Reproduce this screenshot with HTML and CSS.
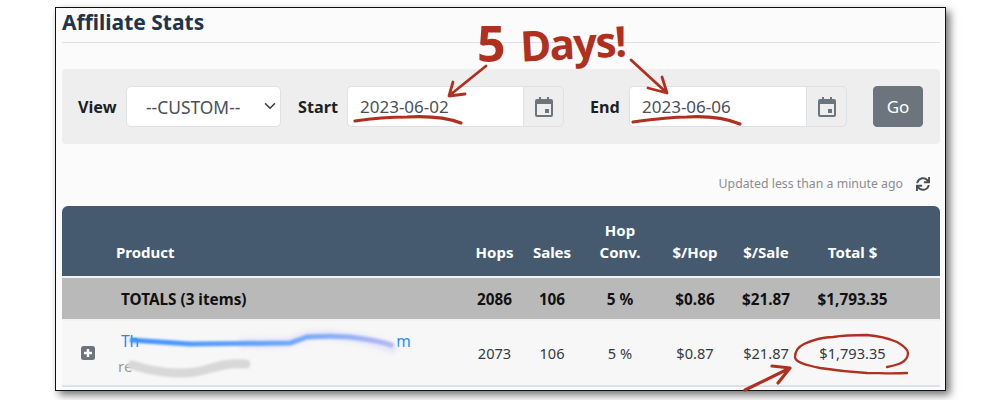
FILE: index.html
```html
<!DOCTYPE html>
<html lang="en">
<head>
<meta charset="utf-8">
<title>Affiliate Stats</title>
<link rel="stylesheet" href="styles.css">
</head>
<body>
<main class="window">
  <h1 class="title">Affiliate Stats</h1>
  <form class="filters">
    <label class="lbl lbl-view" for="view">View</label>
    <div class="select-wrap">
      <select id="view" class="select"><option>--CUSTOM--</option></select>
      <svg class="chevron" viewBox="0 0 16 16" width="12" height="12"><path d="M2 5l6 6 6-6" fill="none" stroke="#343a40" stroke-width="2" stroke-linecap="round" stroke-linejoin="round"/></svg>
    </div>
    <label class="lbl lbl-start" for="start">Start</label>
    <div class="date-group date-group-start">
      <input id="start" class="date-input" type="text" value="2023-06-02">
      <span class="addon"><svg width="18" height="20" viewBox="0 0 18 20"><path class="cal" d="M4 0h2v2h6V0h2v2h2a2 2 0 0 1 2 2v14a2 2 0 0 1-2 2H2a2 2 0 0 1-2-2V4a2 2 0 0 1 2-2h2zM2 7v11h14V7zm8 5h4v4h-4z"/></svg></span>
    </div>
    <label class="lbl lbl-end" for="end">End</label>
    <div class="date-group">
      <input id="end" class="date-input" type="text" value="2023-06-06">
      <span class="addon"><svg width="18" height="20" viewBox="0 0 18 20"><path class="cal" d="M4 0h2v2h6V0h2v2h2a2 2 0 0 1 2 2v14a2 2 0 0 1-2 2H2a2 2 0 0 1-2-2V4a2 2 0 0 1 2-2h2zM2 7v11h14V7zm8 5h4v4h-4z"/></svg></span>
    </div>
    <button class="go" type="button">Go</button>
  </form>
  <div class="updated">
    <span>Updated less than a minute ago</span>
    <svg class="refresh" viewBox="0 0 512 512" width="14" height="14"><path d="M440.65 12.57l4 82.77A247.16 247.16 0 0 0 255.83 8C134.73 8 33.91 94.92 12.29 209.82A12 12 0 0 0 24.09 224h49.05a12 12 0 0 0 11.67-9.26 175.91 175.91 0 0 1 317-56.94l-101.46-4.86a12 12 0 0 0-12.57 12v47.41a12 12 0 0 0 12 12H500a12 12 0 0 0 12-12V12a12 12 0 0 0-12-12h-47.37a12 12 0 0 0-11.98 12.57zM255.83 432a175.61 175.61 0 0 1-146-77.8l101.8 4.87a12 12 0 0 0 12.57-12v-47.4a12 12 0 0 0-12-12H12a12 12 0 0 0-12 12V500a12 12 0 0 0 12 12h47.35a12 12 0 0 0 12-12.6l-4.15-82.57A247.17 247.17 0 0 0 255.83 504c121.11 0 221.93-86.92 243.55-201.82a12 12 0 0 0-11.8-14.18h-49.05a12 12 0 0 0-11.67 9.26A175.86 175.86 0 0 1 255.83 432z"/></svg>
  </div>
  <table class="stats">
    <colgroup>
      <col class="c-toggle"><col class="c-product"><col class="c-hops"><col class="c-sales"><col class="c-conv"><col class="c-hop"><col class="c-sale"><col class="c-total"><col class="c-rest">
    </colgroup>
    <thead>
      <tr class="head">
        <th></th><th class="left">Product</th><th>Hops</th><th>Sales</th><th>Hop<br>Conv.</th><th>$/Hop</th><th>$/Sale</th><th>Total $</th><th></th>
      </tr>
    </thead>
    <tbody>
      <tr class="totals">
        <td></td><td class="left name">TOTALS (3 items)</td><td>2086</td><td>106</td><td>5 %</td><td>$0.86</td><td>$21.87</td><td>$1,793.35</td><td></td>
      </tr>
      <tr class="row">
        <td class="toggle"><svg width="14" height="14" viewBox="0 0 14 14"><rect width="14" height="14" rx="2.5" fill="#6c757d"/><path d="M7 3v8M3 7h8" stroke="#fff" stroke-width="2.4"/></svg></td>
        <td class="left name"><a class="link" href="#">Th<span class="gap"></span>m</a><div class="sub">re</div></td>
        <td>2073</td><td>106</td><td>5 %</td><td>$0.87</td><td>$21.87</td><td>$1,793.35</td><td></td>
      </tr>
    </tbody>
  </table>
</main>

<svg class="marks" width="1000" height="400" viewBox="0 0 1000 400">
  <defs>
    <filter id="soft" x="-10%" y="-200%" width="120%" height="500%"><feGaussianBlur stdDeviation="0.8"/></filter>
    <filter id="softer" x="-10%" y="-200%" width="120%" height="500%"><feGaussianBlur stdDeviation="2"/></filter>
    <linearGradient id="smear" gradientUnits="userSpaceOnUse" x1="130" y1="0" x2="394" y2="0">
      <stop offset="0" stop-color="#3d92ff"/>
      <stop offset=".6" stop-color="#6ea8f8"/>
      <stop offset="1" stop-color="#b5baf0"/>
    </linearGradient>
  </defs>
  <path d="M240 343C262 343 280 344 290 342C298 340 300 335 320 335C350 335 375 341 396 350" fill="none" stroke="#e6e6fa" stroke-width="10" filter="url(#softer)"/>
  <path d="M130 340L190 344L290 343L307 337C325 336 345 336 357 338C372 340 385 342 393 346" fill="none" stroke="url(#smear)" stroke-width="5" filter="url(#soft)"/>
  <path d="M132 365C150 371 175 375 195 372C210 370 222 362 246 364" fill="none" stroke="#d8d8d8" stroke-width="9" stroke-linecap="round" filter="url(#soft)"/>
  <g fill="none" stroke="#b03020" stroke-linecap="round" stroke-linejoin="round">
    <path stroke-width="2.8" d="M486 66L450 95M453 82L449 96L465 94"/>
    <path stroke-width="2.8" d="M631 60L667 93M648 88L667 93L662 77"/>
    <path stroke-width="3.2" d="M355 121C375 118 390 117 407 117C425 116 445 117 461 123"/>
    <path stroke-width="3.2" d="M633 122C655 119 672 117 687 117C705 116 725 118 740 124"/>
    <path stroke-width="2.3" d="M907 373C890 374 880 373 867 373C850 372 833 370 820 368C805 365 795 362 795 357C795 351 798 347 804 344C815 339 825 337 833 337C845 335 855 335 867 335C880 336 890 339 897 342C904 346 908 349 908 353C908 358 905 361 901 363C897 365 892 366 887 367"/>
    <path stroke-width="3.2" d="M745 390L788 369M772 366L790 368L778 383"/>
  </g>
</svg>
<div class="handwriting"><span class="five">5</span><span class="days">Days!</span></div>
</body>
</html>
```
FILE: styles.css
```css
* { box-sizing: border-box; }
html, body { margin: 0; padding: 0; }
body {
  width: 1000px;
  height: 400px;
  overflow: hidden;
  background: #fff;
  font-family: "Noto Sans", "Open Sans", sans-serif;
  color: #212529;
  position: relative;
  padding: 7px 0 0 55px;
}
.window {
  width: 891px;
  height: 384px;
  background: #fbfbfb;
  border: 1px solid #111;
  box-shadow: 4px 4px 8px rgba(0, 0, 0, .55);
  padding: 0 5px 0 6px;
  overflow: hidden;
}
.title {
  margin: 0;
  height: 35px;
  border-bottom: 1px solid #dcdfe3;
  font-size: 21px;
  line-height: 29px;
  font-weight: 700;
  color: #22344a;
}
.filters {
  margin-top: 26px;
  height: 75px;
  background: #eee;
  border-radius: 4px;
  display: flex;
  align-items: center;
  padding-left: 16px;
  font-size: 16px;
}
.lbl { font-weight: 700; font-size: 16.2px; color: #1c1f23; }
.lbl-view { width: 48px; }
.lbl-start { width: 49px; margin-left: 17px; }
.lbl-end { width: 39px; margin-left: 26px; }
.select-wrap { position: relative; width: 155px; height: 41px; }
.select {
  appearance: none;
  width: 100%;
  height: 100%;
  padding: 0 0 0 19px;
  border: 1px solid #dee2e6;
  border-radius: 5px;
  background: #fff;
  color: #495057;
  font: 17.4px "Noto Sans", sans-serif;
}
.chevron { position: absolute; right: 5px; top: 14px; pointer-events: none; }
.date-group { display: flex; width: 218px; height: 41px; }
.date-group-start { width: 217px; }
.date-input {
  flex: 1;
  min-width: 0;
  height: 100%;
  padding: 0 0 0 12px;
  border: 1px solid #dee2e6;
  border-right: 0;
  border-radius: 5px 0 0 5px;
  background: #fff;
  color: #495057;
  font: 17px "Noto Sans", sans-serif;
}
.addon {
  width: 41px;
  display: flex;
  align-items: center;
  justify-content: center;
  border: 1px solid #dee2e6;
  border-radius: 0 5px 5px 0;
  background: #eee;
}
.cal { fill: #6c757d; fill-rule: evenodd; }
.go {
  width: 50px;
  height: 41px;
  margin-left: 26px;
  border: 1px solid #6c757d;
  border-radius: 4px;
  background: #6c757d;
  color: #fff;
  font: 17px "Noto Sans", sans-serif;
}
.updated {
  height: 62px;
  padding: 31px 10px 0 0;
  display: flex;
  justify-content: flex-end;
  align-items: flex-start;
  gap: 13px;
  font-size: 12.3px;
  line-height: 18px;
  color: #8a8d90;
}
.refresh { fill: #495057; margin-top: 2px; }
.stats {
  width: 878px;
  table-layout: fixed;
  border-collapse: separate;
  border-spacing: 0;
  font-size: 15.3px;
  color: #212529;
}
.c-toggle { width: 50px; }
.c-product { width: 355px; }
.c-hops { width: 55px; }
.c-sales { width: 60px; }
.c-conv { width: 76px; }
.c-hop { width: 74px; }
.c-sale { width: 68px; }
.c-total { width: 105px; }
.c-rest { width: 35px; }
.stats th, .stats td { padding: 0; text-align: center; }
.stats .left { text-align: left; }
.head th {
  height: 70px;
  vertical-align: bottom;
  padding-bottom: 13px;
  background: #455a6f;
  color: #fff;
  font-size: 15px;
  line-height: 22px;
  font-weight: 700;
}
.head th:first-child { border-top-left-radius: 6px; }
.head th:last-child { border-top-right-radius: 6px; }
.head .left { padding-left: 4px; }
.totals td {
  height: 45px;
  background: #b9b9b9;
  border-top: 2px solid #f2f2f2;
  border-bottom: 2px solid #f2f2f2;
  color: #111;
  font-weight: 700;
}
.stats td.name { padding-left: 9px; }
.row td {
  height: 66px;
  background: #f7f7f7;
  border-bottom: 2px solid #dee2e6;
  color: #343a40;
  font-size: 14.6px;
}
.toggle svg { display: block; margin-left: 19px; }
.link { color: #1a8cff; text-decoration: none; font-size: 15.5px; display: flex; }
.gap { width: 257px; }
.sub { color: #999; font-size: 15px; line-height: 20px; margin: 4px 0 0 -3px; }
.marks { position: absolute; left: 0; top: 0; pointer-events: none; }
.handwriting {
  position: absolute;
  left: 477px;
  top: 9px;
  display: flex;
  align-items: flex-start;
  gap: 14px;
  font-family: "Open Sans", sans-serif;
  font-weight: 700;
  color: #b03020;
  pointer-events: none;
}
.five { font-size: 50px; line-height: 68px; }
.days {
  font-size: 42px;
  line-height: 68px;
  letter-spacing: -1.6px;
  transform: rotate(-3deg);
}
```
